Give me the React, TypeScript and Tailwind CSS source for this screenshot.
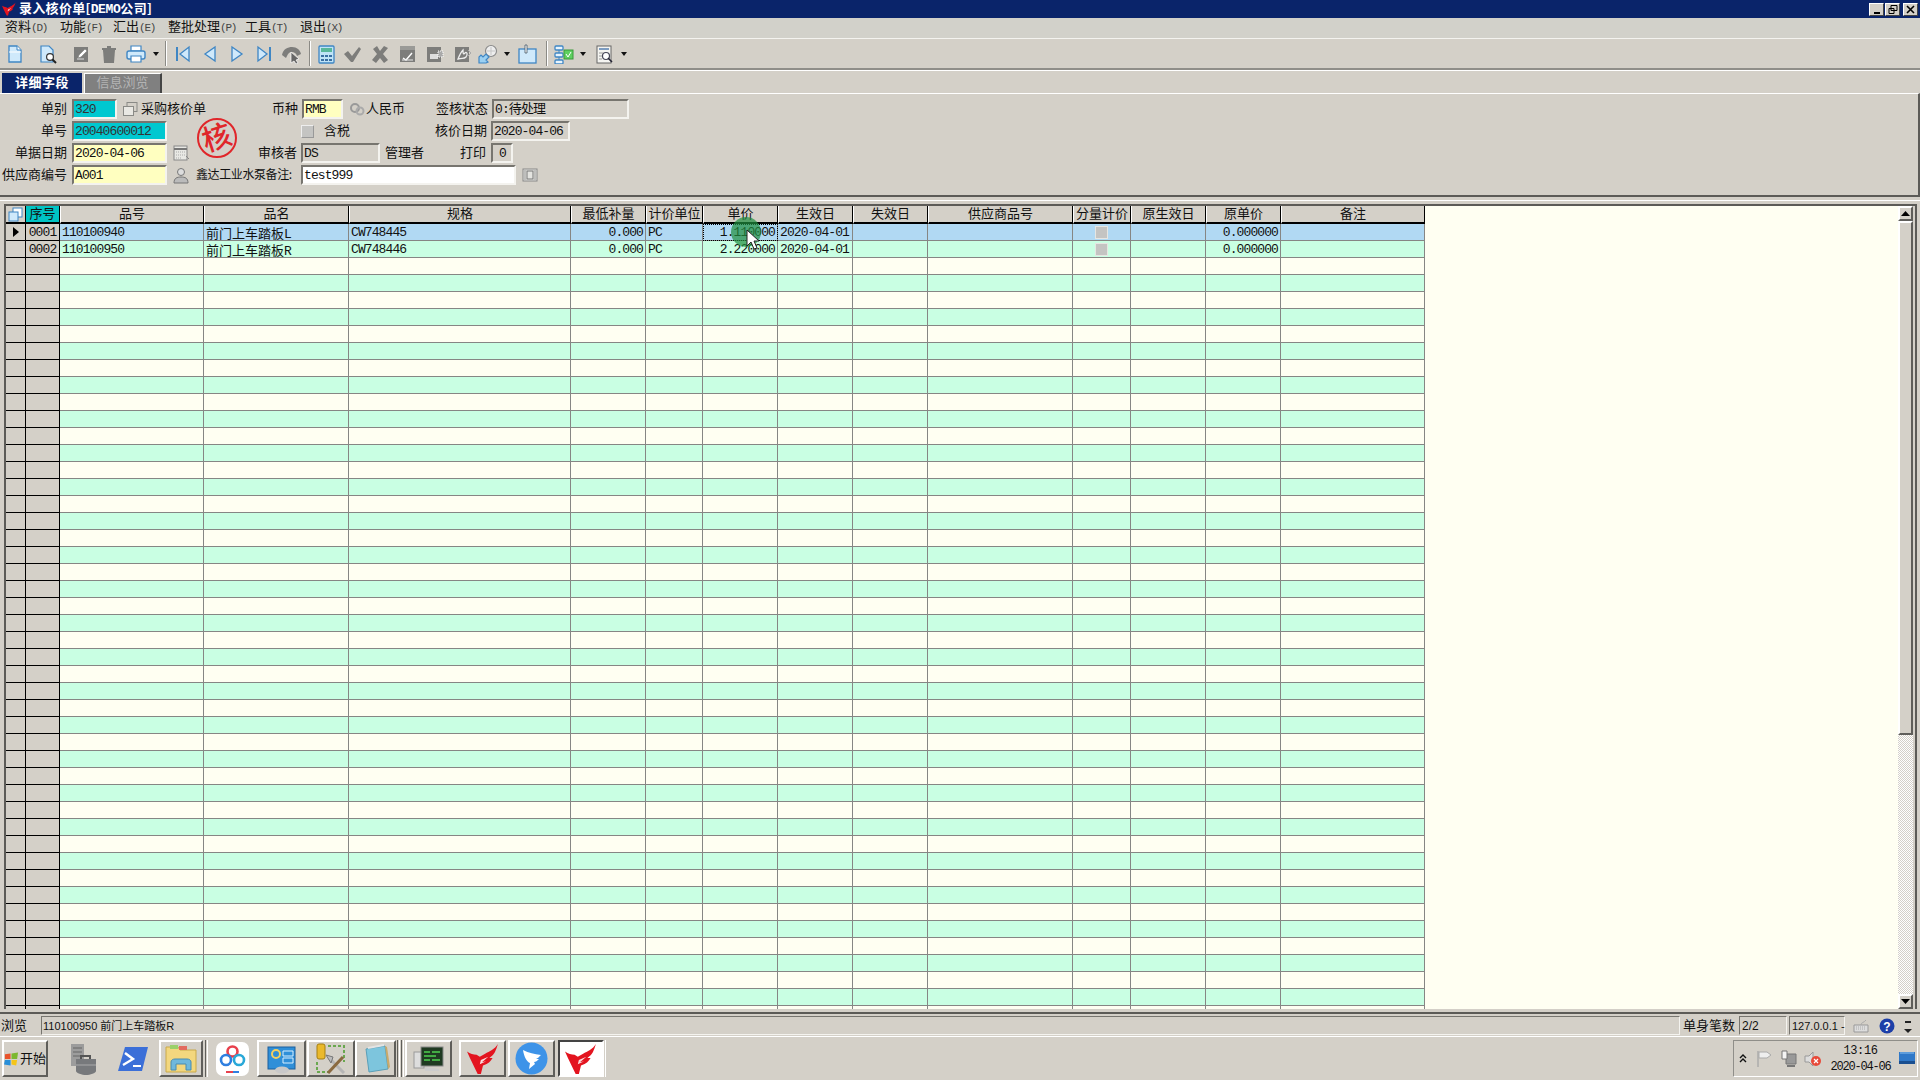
import React from "react";

const COLS = "grid grid-cols-[20px_34px_144px_145px_222px_75px_57px_75px_75px_75px_145px_58px_75px_75px_144px]";
const sunken = "border-2 border-t-[#77756f] border-l-[#77756f] border-b-[#f4f3ef] border-r-[#f4f3ef]";
const raised = "border-2 border-t-white border-l-white border-b-[#5f5e5a] border-r-[#5f5e5a]";
const mono = "font-['Liberation_Mono','Noto_Sans_CJK_SC',monospace] text-[13px] tracking-[-0.9px]";

const B = "#3f86c4";
const P = "#cfe9fb";
const G = "#7d7d7b";

const S = ({ w = 20, h = 20, children }: { w?: number; h?: number; children: React.ReactNode }) => (
  <svg width={w} height={h} viewBox={`0 0 ${w} ${h}`} className="block shrink-0">{children}</svg>
);

const Dd = () => (
  <div className="flex w-[14px] justify-center"><S w={6} h={4}><path d="M0 0h6L3 4z" fill="#111" /></S></div>
);
const Sep = ({ m }: { m: number }) => (
  <div className="h-[25px] w-[2px] border-l border-l-[#8b8a85] border-r border-r-white" style={{ marginLeft: m, marginRight: m }} />
);
const Tb = ({ children, w = 27 }: { children: React.ReactNode; w?: number }) => (
  <div className="flex shrink-0 justify-center" style={{ width: w }}>{children}</div>
);

const icons = {
  doc: <S><path d="M4 2h8l4 4v12H4z" fill={P} stroke={B} strokeWidth="1.3" /><path d="M4 8h12" stroke="#fff" strokeWidth="1" /><path d="M12 2v4h4" fill="#fff" stroke={B} /></S>,
  preview: <S><path d="M3 2h8l4 4v12H3z" fill={P} stroke={B} strokeWidth="1.2" /><circle cx="12" cy="13" r="3.4" fill="#fff" stroke="#333" strokeWidth="1.2" /><path d="M14.5 15.5l3.5 3.5" stroke="#222" strokeWidth="2" /></S>,
  edit: <S><rect x="3" y="3" width="14" height="15" fill={G} /><path d="M7 14l1-3 6-6 2 2-6 6z" fill="#fff" stroke={G} strokeWidth=".6" /><path d="M6 15h7" stroke="#ddd" /></S>,
  trash: <S><path d="M3 4h14v2H3z" fill={G} /><path d="M8 2h4v2H8z" fill={G} /><path d="M4 6h12l-1 13H5z" fill={G} /></S>,
  printer: <S w={22}><path d="M6 2h10v5H6z" fill="#fff" stroke={B} strokeWidth="1.2" /><rect x="2" y="7" width="18" height="8" rx="2" fill={P} stroke={B} strokeWidth="1.4" /><path d="M6 12h10v6H6z" fill="#fff" stroke={B} strokeWidth="1.2" /></S>,
  first: <S><path d="M4 3v14" stroke={B} strokeWidth="2" /><path d="M16 3v14L7 10z" fill={P} stroke={B} strokeWidth="1.3" /></S>,
  prev: <S><path d="M15 3v14L5 10z" fill={P} stroke={B} strokeWidth="1.3" /></S>,
  next: <S><path d="M5 3v14l10-7z" fill={P} stroke={B} strokeWidth="1.3" /></S>,
  last: <S><path d="M16 3v14" stroke={B} strokeWidth="2" /><path d="M4 3v14l9-7z" fill={P} stroke={B} strokeWidth="1.3" /></S>,
  undo: <S w={24}><path d="M2 11C3 5 8 3 12 3c5 0 8 3 9 7l-4 2c-1-3-3-4-5-4-3 0-4 2-5 4l-1 2z" fill={G} /><path d="M11 8l8 7-3 1 2 3-2 1-2-3-3 2z" fill="#666" stroke="#fff" strokeWidth=".7" /></S>,
  calc: <S><rect x="3" y="2" width="15" height="17" rx="1" fill="#bfe3f7" stroke={B} strokeWidth="1.3" /><rect x="5" y="4" width="11" height="4" fill="#58b79a" /><path d="M5 11h3v2H5zM9 11h3v2H9zM13 11h3v2h-3zM5 15h3v2H5zM9 15h3v2H9zM13 15h3v2h-3z" fill="#3a6fa3" /></S>,
  check: <S><path d="M2 10l4-3 4 5 7-9 2 2-8 13h-2z" fill={G} /></S>,
  x: <S><path d="M3 5l4-3 3 5 4-5 4 2-5 6 5 6-4 3-4-5-4 5-4-3 5-6z" fill={G} /></S>,
  g1: <S><rect x="3" y="4" width="15" height="14" fill={G} /><rect x="3" y="2" width="15" height="4" fill="#9a9a97" /><path d="M6 14l3 2 6-7" stroke="#fff" strokeWidth="1.4" fill="none" /><path d="M5 16h11" stroke="#e8e8e8" /></S>,
  g2: <S><rect x="3" y="3" width="14" height="15" fill={G} /><rect x="6" y="10" width="8" height="5" fill="#ddd" /><path d="M14 7h5v6h-5z" fill="#aaa" stroke="#fff" strokeDasharray="1 1" /></S>,
  g3: <S><rect x="3" y="3" width="14" height="15" fill={G} /><path d="M6 15c2-5 3-7 5-9 0 3 0 5 2 3s3 2 1 4-3 1-8 2z" fill="none" stroke="#eee" strokeWidth="1.3" /><path d="M16 6l3 3-3 3" stroke="#aaa" fill="none" /></S>,
  key: <S w={22}><circle cx="14" cy="7" r="5.5" fill="#eee" stroke="#8a8a8a" strokeWidth="1.2" /><path d="M14 3v8M10 7h8" stroke="#c6c6c6" /><path d="M2 19v-6l2-2 2 2 3-3 3 3-3 3 2 2-2 1z" fill="#9bd0f2" stroke={B} strokeWidth="1.2" /></S>,
  note: <S w={22}><rect x="2" y="5" width="17" height="14" fill={P} stroke={B} strokeWidth="1.3" /><path d="M8 1h2v8H8z" fill="#fff" stroke="#456" strokeWidth=".8" /></S>,
  tree: <S w={22}><rect x="2" y="2" width="8" height="4" rx="1" fill="#e8f4fc" stroke={B} strokeWidth="1.3" /><rect x="2" y="9" width="8" height="4" rx="1" fill="#e8f4fc" stroke={B} strokeWidth="1.3" /><rect x="2" y="16" width="8" height="4" rx="1" fill="#e8f4fc" stroke={B} strokeWidth="1.3" /><path d="M6 6v3M6 13v3" stroke={B} /><rect x="11" y="6" width="9" height="9" fill="#5fd060" stroke="#3a9a3a" /><path d="M13 10l2 3 3-5" stroke="#fff" fill="none" /></S>,
  docs: <S><rect x="3" y="2" width="14" height="17" fill="#f4f4f0" stroke="#666" /><path d="M5 5h10" stroke="#7d9cc0" strokeWidth="2" /><circle cx="12" cy="12" r="3.5" fill="#fff" stroke="#445" strokeWidth="1.2" /><path d="M14 14l4 4" stroke="#223" strokeWidth="1.6" /><path d="M5 9h4M5 12h3M5 15h3" stroke="#999" /></S>,
};

const Redlogo = ({ w = 30, h = 28 }: { w?: number; h?: number }) => (
  <svg width={w} height={h} viewBox="0 0 30 28" className="block shrink-0">
    <path d="M0 7c3 2 6 3 9 3l3 2 5-3c4-2 9-4 12-9-2 6-3 10-8 13l3 0c-3 5-6 6-9 7l-2 8-3 0C7 22 3 14 0 7z" fill="#e3141f" />
    <path d="M11 23l2-8 7-3-6 5 4-1-6 3z" fill="#fff" opacity=".85" />
  </svg>
);

const Lb = ({ w, children, className = "" }: { w: number; children: React.ReactNode; className?: string }) => (
  <div className={`shrink-0 whitespace-nowrap pb-[2px] text-right ${className}`} style={{ width: w }}>{children}</div>
);
const Fd = ({ w, bg, children, className = "" }: { w: number; bg: string; children?: React.ReactNode; className?: string }) => (
  <div className={`${sunken} ${mono} ${bg} h-[20px] shrink-0 whitespace-nowrap pl-[1px] leading-[17px] ${className}`} style={{ width: w }}>{children}</div>
);

type Row = { seq?: string; no?: string; name?: string; suffix?: string; spec?: string; min?: string; unit?: string; price?: string; from?: string; old?: string };
const data: Row[] = [
  { seq: "0001", no: "110100940", name: "前门上车踏板", suffix: "L", spec: "CW748445", min: "0.000", unit: "PC", price: "1.110000", from: "2020-04-01", old: "0.000000" },
  { seq: "0002", no: "110100950", name: "前门上车踏板", suffix: "R", spec: "CW748446", min: "0.000", unit: "PC", price: "2.220000", from: "2020-04-01", old: "0.000000" },
];
const rows: Row[] = [...data, ...Array.from({ length: 45 }, () => ({}))];
const heads = ["品号", "品名", "规格", "最低补量", "计价单位", "单价", "生效日", "失效日", "供应商品号", "分量计价", "原生效日", "原单价", "备注"];
const cell = "border-r border-b border-[#868684] h-[17px] whitespace-nowrap leading-[18px]";

const Cb = () => <div className="mt-[1px] h-[13px] w-[13px] border border-[#e6e6e2] bg-[#c4c4c2]" />;

function GridRow({ r, i }: { r: Row; i: number }) {
  const bg = i === 0 ? "bg-[#b1d9f3]" : i % 2 === 1 ? "bg-[#c9ffe3]" : "bg-[#fffff2]";
  const num = `${cell} ${mono} px-[2px] text-right`;
  const txt = `${cell} ${mono} px-[2px]`;
  return (
    <div className={`${COLS} ${bg}`}>
      <div className="flex h-[17px] items-center justify-center border-r border-b border-black bg-[#d4d0c8]">
        {i === 0 && <S w={6} h={10}><path d="M0 0l6 5-6 5z" fill="#000" /></S>}
      </div>
      <div className={`h-[17px] border-r border-b border-black bg-[#d4d0c8] text-center leading-[18px] ${mono}`}>{r.seq}</div>
      <div className={txt}>{r.no}</div>
      <div className={`${cell} px-[2px]`}>{r.name}{r.suffix && <span className={mono}>{r.suffix}</span>}</div>
      <div className={txt}>{r.spec}</div>
      <div className={num}>{r.min}</div>
      <div className={txt}>{r.unit}</div>
      <div className={`${num} ${i === 0 ? "outline-1 -outline-offset-1 outline-dotted outline-black" : ""}`}>{r.price}</div>
      <div className={txt}>{r.from}</div>
      <div className={cell} />
      <div className={cell} />
      <div className={`${cell} flex items-center justify-center`}>{r.seq && <Cb />}</div>
      <div className={cell} />
      <div className={num}>{r.old}</div>
      <div className={cell} />
    </div>
  );
}

const SB = ({ children }: { children: React.ReactNode }) => (
  <div className={`flex h-[15px] w-[15px] shrink-0 items-center justify-center bg-[#d4d0c8] ${raised}`}>{children}</div>
);

const WinBtn = ({ children }: { children: React.ReactNode }) => (
  <div className="flex h-[13px] w-[15px] items-center justify-center border border-t-white border-l-white border-b-[#444] border-r-[#444] bg-[#d4d0c8]">{children}</div>
);

const TaskBtn = ({ w, children, active, flat }: { w: number; children: React.ReactNode; active?: boolean; flat?: boolean }) => (
  <div
    className={`flex h-[37px] shrink-0 items-center justify-center ${flat ? "" : active ? "border-2 border-t-[#444] border-l-[#444] border-b-white border-r-white bg-white" : raised}`}
    style={{ width: w }}
  >{children}</div>
);

export default function App() {
  return (
    <div className="relative flex h-[1080px] w-[1920px] flex-col overflow-hidden bg-[#d4d0c8] font-['Noto_Sans_CJK_SC',sans-serif] text-[13px] leading-[18px] text-[#111]">
      {/* title */}
      <div className="flex h-[18px] shrink-0 items-center bg-[#0a246a] pl-[2px] text-white">
        <Redlogo w={14} h={14} />
        <span className="ml-[3px] whitespace-nowrap font-bold tracking-[0.3px]">录入核价单[<span className="font-['Liberation_Mono'] text-[13px] tracking-[-0.4px]">DEMO</span>公司]</span>
        <div className="ml-auto mr-[2px] flex gap-[1px]">
          <WinBtn><S w={8} h={9}><path d="M1 7h6v2H1z" fill="#000" /></S></WinBtn>
          <WinBtn><S w={10} h={9}><path d="M3 .5h6v5H3zM1 3.5h5v5H1z" fill="#d4d0c8" stroke="#000" /></S></WinBtn>
          <div className="w-[1px]" />
          <WinBtn><S w={9} h={9}><path d="M1 1l7 7M8 1L1 8" stroke="#000" strokeWidth="1.6" /></S></WinBtn>
        </div>
      </div>

      {/* menu */}
      <div className="flex h-[21px] shrink-0 items-center border-b border-b-[#f4f3ef] bg-[#d2d1ca] pb-[2px] pl-[5px]">
        {[["资料", "(D)", 55], ["功能", "(F)", 53], ["汇出", "(E)", 55], ["整批处理", "(P)", 77], ["工具", "(T)", 55], ["退出", "(X)", 50]].map(([a, b, w]) => (
          <div key={a as string} className="whitespace-nowrap" style={{ width: w as number }}>
            {a}<span className="font-['Liberation_Mono'] text-[11px] tracking-[-1.2px] text-[#444]">{b}</span>
          </div>
        ))}
      </div>

      {/* toolbar */}
      <div className="flex h-[31px] shrink-0 items-center border-b-2 border-b-[#8f8e89] pl-[1px]">
        <Tb>{icons.doc}</Tb>
        <Tb w={39}>{icons.preview}</Tb>
        <Tb w={28}>{icons.edit}</Tb>
        <Tb>{icons.trash}</Tb>
        <Tb w={27}>{icons.printer}</Tb>
        <Dd />
        <Sep m={2} />
        <Tb>{icons.first}</Tb>
        <Tb>{icons.prev}</Tb>
        <Tb>{icons.next}</Tb>
        <Tb>{icons.last}</Tb>
        <Tb w={29}>{icons.undo}</Tb>
        <Sep m={3} />
        <Tb w={24}>{icons.calc}</Tb>
        <Tb w={28}>{icons.check}</Tb>
        <Tb w={27}>{icons.x}</Tb>
        <Tb w={27}>{icons.g1}</Tb>
        <Tb w={28}>{icons.g2}</Tb>
        <Tb w={28}>{icons.g3}</Tb>
        <Tb w={24}>{icons.key}</Tb>
        <Dd />
        <Tb w={28}>{icons.note}</Tb>
        <Sep m={4} />
        <Tb w={24}>{icons.tree}</Tb>
        <Dd />
        <Tb w={27}>{icons.docs}</Tb>
        <Dd />
      </div>

      {/* tabs */}
      <div className="flex h-[23px] shrink-0 items-end gap-[2px] border-t border-t-white pl-[2px]">
        <div className="flex h-[20px] w-[80px] items-center justify-center bg-[#0a246a] pb-[3px] font-bold tracking-[0.5px] text-white">详细字段</div>
        <div className="flex h-[20px] w-[78px] items-center justify-center border-t border-l border-white border-r-2 border-r-[#444] bg-[#808080] pb-[3px] text-[#b4b4b4]">信息浏览</div>
      </div>

      {/* form */}
      <div className="relative flex h-[104px] shrink-0 flex-col border-t border-t-white border-b-2 border-b-[#5c5b57] border-r-2 border-r-[#5c5b57] pt-[4px]">
        <div className="flex h-[22px] items-center">
          <Lb w={68} className="pr-[1px]">单别</Lb>
          <Fd w={45} bg="bg-[#00c8d0]" className="ml-[4px] !text-[#333]">320</Fd>
          <div className="ml-[5px] w-[16px]"><S w={16} h={16}><rect x="5" y="1.5" width="10" height="9" fill="#d4d0c8" stroke="#8a8a86" /><rect x="1.5" y="5.5" width="10" height="9" fill="#e9e8e3" stroke="#8a8a86" /></S></div>
          <div className="ml-[3px] w-[65px] whitespace-nowrap pb-[2px]">采购核价单</div>
          <Lb w={92}>币种</Lb>
          <Fd w={41} bg="bg-[#ffffc0]" className="ml-[4px]">RMB</Fd>
          <div className="ml-[6px] w-[17px]"><S w={16} h={16}><circle cx="6" cy="7" r="4" fill="none" stroke="#999" strokeWidth="2" /><circle cx="11" cy="10" r="3.5" fill="none" stroke="#aaa" strokeWidth="2" /></S></div>
          <div className="w-[39px] whitespace-nowrap pb-[2px]">人民币</div>
          <Lb w={83}>签核状态</Lb>
          <Fd w={137} bg="bg-[#d4d0c8]" className="ml-[4px]">0:待处理</Fd>
        </div>
        <div className="flex h-[22px] items-center">
          <Lb w={68} className="pr-[1px]">单号</Lb>
          <Fd w={95} bg="bg-[#00c8d0]" className="ml-[4px] !text-[#333]">20040600012</Fd>
          <div className="ml-[134px] h-[13px] w-[13px] border border-t-[#eee] border-l-[#eee] border-b-[#999] border-r-[#999] bg-[#c4c4c2]" />
          <div className="ml-[10px] w-[31px] whitespace-nowrap pb-[2px]">含税</div>
          <Lb w={132}>核价日期</Lb>
          <Fd w={79} bg="bg-[#d4d0c8]" className="ml-[4px]">2020-04-06</Fd>
        </div>
        <div className="flex h-[22px] items-center">
          <Lb w={68} className="pr-[1px]">单据日期</Lb>
          <Fd w={95} bg="bg-[#ffffc0]" className="ml-[4px]">2020-04-06</Fd>
          <div className="ml-[6px] w-[17px]"><S w={16} h={18}><rect x="1" y="2" width="13" height="14" fill="#e8e8e4" stroke="#888" /><path d="M1 5h13" stroke="#777" strokeWidth="2" /><path d="M3 8h9M3 11h9M3 14h6" stroke="#aaa" strokeDasharray="1 1" /><path d="M13 12l3 3" stroke="#888" /></S></div>
          <Lb w={107}>审核者</Lb>
          <Fd w={79} bg="bg-[#d4d0c8]" className="ml-[4px]">DS</Fd>
          <div className="ml-[5px] w-[39px] whitespace-nowrap pb-[2px]">管理者</div>
          <Lb w={62}>打印</Lb>
          <Fd w={22} bg="bg-[#d4d0c8]" className="ml-[5px] pl-[6px]">0</Fd>
        </div>
        <div className="flex h-[22px] items-center">
          <Lb w={68} className="pr-[1px]">供应商编号</Lb>
          <Fd w={95} bg="bg-[#ffffc0]" className="ml-[4px]">A001</Fd>
          <div className="ml-[6px] w-[17px]"><S w={16} h={18}><circle cx="8" cy="6" r="3.5" fill="#ddd" stroke="#777" /><path d="M1 17c0-5 3-6 7-6s7 1 7 6z" fill="#bbb" stroke="#777" /></S></div>
          <div className="ml-[6px] w-[105px] whitespace-nowrap pb-[2px] text-[12px] tracking-[-0.4px]">鑫达工业水泵备注:</div>
          <Fd w={215} bg="bg-white">test999</Fd>
          <div className="ml-[6px]"><S w={16} h={16}><rect x="1" y="2" width="14" height="12" fill="#e4e4e0" stroke="#888" /><rect x="5" y="4" width="6" height="8" fill="none" stroke="#777" /><path d="M3 3v10M13 3v10" stroke="#999" /></S></div>
        </div>
        {/* stamp */}
        <svg width="42" height="42" viewBox="0 0 42 42" className="absolute left-[196px] top-[23px]">
          <circle cx="21" cy="21" r="19" fill="none" stroke="#e0262a" strokeWidth="2" />
          <text x="21" y="31" textAnchor="middle" fontSize="29" fontWeight="500" fill="#e0262a" fontFamily="Noto Sans CJK SC" transform="rotate(-18 21 21)">核</text>
        </svg>
      </div>

      {/* grid */}
      <div className="mt-[3px] flex min-h-0 flex-1 flex-col border-t border-t-white border-b-2 border-b-[#5c5b57] pl-[4px] pr-[3px] pt-[3px] pb-[3px]">
        <div className="flex min-h-0 flex-1 overflow-hidden border-t-2 border-l-2 border-t-[#5c5b57] border-l-[#5c5b57] bg-[#fffff2]">
          <div className="w-[1419px] shrink-0 overflow-hidden">
            <div className={`${COLS} h-[18px] bg-[#d4d0c8] leading-[13px]`}>
              <div className="flex items-center justify-center border-r border-b-2 border-black">
                <S w={15} h={15}><rect x="5" y="1" width="9" height="9" fill="#fff" stroke="#3f86c4" /><rect x="1" y="5" width="9" height="9" fill="#cfe9fb" stroke="#3f86c4" /></S>
              </div>
              <div className="border-r border-b-2 border-black bg-[#00c4c4] text-center">序号</div>
              {heads.map((h) => (
                <div key={h} className="whitespace-nowrap border-r border-b-2 border-r-black border-b-black border-l border-l-white text-center">{h}</div>
              ))}
            </div>
            {rows.map((r, i) => <GridRow key={i} r={r} i={i} />)}
          </div>
          <div className="flex-1" />
          <div className="flex w-[15px] shrink-0 flex-col">
            <SB><S w={9} h={5}><path d="M0 5h9L4.5 0z" fill="#000" /></S></SB>
            <div className={`h-[514px] shrink-0 bg-[#d4d0c8] ${raised}`} />
            <div className="flex-1 bg-[repeating-conic-gradient(#d4d0c8_0_25%,#ffffff_0_50%)] bg-[length:2px_2px]" />
            <SB><S w={9} h={5}><path d="M0 0h9L4.5 5z" fill="#000" /></S></SB>
          </div>
          <div className="w-[4px] shrink-0 border-r-2 border-r-[#5c5b57] bg-[#d4d0c8]" />
        </div>
      </div>

      {/* status */}
      <div className="flex h-[23px] shrink-0 items-center border-b border-b-white pb-[1px] pt-[2px] font-['Liberation_Sans','Noto_Sans_CJK_SC',sans-serif] text-[12px]">
        <div className="w-[41px] pl-[1px] text-[13px]">浏览</div>
        <div className={`${sunken} !border h-[19px] w-[1639px] pl-[1px] text-[11px] leading-[19px]`}>110100950 前门上车踏板R</div>
        <div className="w-[58px] text-center text-[13px] leading-[18px]">单身笔数</div>
        <div className={`${sunken} !border ml-[1px] h-[19px] w-[48px] pl-[2px] leading-[18px]`}>2/2</div>
        <div className={`${sunken} !border ml-[2px] h-[19px] w-[56px] whitespace-nowrap pl-[2px] text-[11px] leading-[18px]`}>127.0.0.1 -</div>
        <div className="ml-[7px]"><S w={18} h={16}><path d="M2 7h14v7H2z" fill="#ddd" stroke="#999" /><path d="M4 9h10M4 11h10" stroke="#aaa" strokeDasharray="1 1" /><path d="M9 7c0-3 3-2 5-5" stroke="#aaa" fill="none" /></S></div>
        <div className="ml-[9px]"><svg width="16" height="16" viewBox="0 0 16 16" className="block"><circle cx="8" cy="8" r="7.5" fill="#1d3fa8" /><text x="8" y="12.5" textAnchor="middle" fontSize="12" fontWeight="700" fill="#fff" fontFamily="Liberation Sans">?</text></svg></div>
        <div className="ml-[9px]"><S w={8} h={14}><path d="M1 2h6v2H1zM0 10h8l-4 4z" fill="#222" /></S></div>
      </div>

      {/* taskbar */}
      <div className="flex h-[43px] shrink-0 items-start pt-[3px] pl-[2px]">
        <TaskBtn w={46}>
          <svg width="16" height="16" viewBox="0 0 16 16" className="block"><path d="M1 3l6-1v6H1z" fill="#e8532b" /><path d="M8 2l7-1-1 7H8z" fill="#7cb82f" /><path d="M1 9h6v6l-7-1z" fill="#2a8fd8" /><path d="M8 9h6l-1 6-5-1z" fill="#f5c518" /></svg>
          <span className="ml-[1px] whitespace-nowrap pb-[2px]">开始</span>
        </TaskBtn>
        <div className="w-[20px]" />
        <TaskBtn w={30} flat>
          <S w={30} h={34}>
            <rect x="3" y="2" width="13" height="22" fill="#9c9c9c" /><path d="M5 6h9M5 10h9M5 14h9" stroke="#666" />
            <path d="M8 17h20v12c0 2-6 4-10 4s-10-2-10-4z" fill="#77797c" /><path d="M13 17v-3h9v3" fill="none" stroke="#555" strokeWidth="2" /><path d="M8 23h20" stroke="#aaa" />
          </S>
        </TaskBtn>
        <div className="w-[20px]" />
        <TaskBtn w={30} flat>
          <S w={30} h={26}><path d="M7 1h23l-6 24H0z" fill="#3b6fd8" /><path d="M7 7l8 6-10 6" stroke="#fff" strokeWidth="2.4" fill="none" /><path d="M15 20h8" stroke="#fff" strokeWidth="2" /></S>
        </TaskBtn>
        <div className="w-[11px]" />
        <TaskBtn w={44}>
          <S w={32} h={30}>
            <path d="M1 3h12l2 3h16v22H1z" fill="#f3d77e" stroke="#c9a94a" /><path d="M5 1h8v4H5z" fill="#9ad06a" /><path d="M14 2h8v4h-8z" fill="#e26a5f" />
            <path d="M6 26v-8c0-2 2-3 4-3h12c2 0 4 1 4 3v8h-5v-6H11v6z" fill="#6fb8dc" stroke="#4a8cb0" />
          </S>
        </TaskBtn>
        <div className="ml-[2px] h-[37px] w-[3px] border-l border-r border-l-[#5f5e5a] border-r-white" />
        <div className="w-[8px]" />
        <TaskBtn w={33} flat>
          <svg width="33" height="34" viewBox="0 0 33 34" className="block">
            <rect width="33" height="34" rx="7" fill="#fff" />
            <circle cx="16.5" cy="9.5" r="5" fill="none" stroke="#e8404c" strokeWidth="2.6" />
            <circle cx="10" cy="18" r="5" fill="none" stroke="#2f7fe0" strokeWidth="2.6" />
            <circle cx="23" cy="18" r="5" fill="none" stroke="#29a8d8" strokeWidth="2.6" />
            <path d="M10 30h7" stroke="#e8404c" strokeWidth="2" /><path d="M17 30h6" stroke="#2f7fe0" strokeWidth="2" />
          </svg>
        </TaskBtn>
        <div className="w-[8px]" />
        <TaskBtn w={49}>
          <S w={30} h={30}>
            <rect x="1" y="3" width="27" height="22" fill="#2f8fd8" stroke="#1d5f9c" />
            <circle cx="9" cy="10" r="4" fill="none" stroke="#f5d060" strokeWidth="2" />
            <path d="M16 7h10v5H16zM16 14h10v5H16z" fill="none" stroke="#d8efff" />
            <ellipse cx="15" cy="26" rx="7" ry="3.5" fill="#c8c8c8" />
          </S>
        </TaskBtn>
        <div className="w-[1px]" />
        <TaskBtn w={48}>
          <S w={32} h={32}>
            <rect x="2" y="1" width="8" height="15" rx="2" fill="#eab92c" stroke="#a57f10" />
            <path d="M13 3h16v16" fill="none" stroke="#6aa84f" strokeWidth="2" strokeDasharray="3 2" /><path d="M2 19v10h12" fill="none" stroke="#6aa84f" strokeWidth="2" strokeDasharray="3 2" />
            <path d="M14 15l15 15" stroke="#b5b5b5" strokeWidth="3" /><path d="M28 14L13 30" stroke="#8a6a40" strokeWidth="3" /><path d="M11 12l7 2-2 6z" fill="#bbb" stroke="#777" />
          </S>
        </TaskBtn>
        <TaskBtn w={41}>
          <S w={30} h={30}><path d="M5 5l19-3 3 23-19 3z" fill="#7dc5dd" stroke="#5a9fb8" /><path d="M24 2l3 23 2-2-3-20z" fill="#c9a96a" /><path d="M7 4l16-3" stroke="#e4e4e4" strokeWidth="2" /></S>
        </TaskBtn>
        <div className="ml-[1px] h-[37px] w-[3px] border-l border-r border-l-[#5f5e5a] border-r-white" />
        <div className="ml-[1px] h-[37px] w-[3px] border-l border-r border-l-[#5f5e5a] border-r-white" />
        <div className="w-[1px]" />
        <TaskBtn w={47}>
          <S w={32} h={28}><rect x="1" y="7" width="10" height="16" fill="#ddd" stroke="#999" /><rect x="8" y="2" width="22" height="19" fill="#1f3a22" stroke="#888" /><path d="M11 7h6M11 11h12M11 15h6M19 7h8M19 15h8" stroke="#4fd04f" strokeWidth="1.4" /><path d="M12 22l14 2v2H12z" fill="#ccc" /></S>
        </TaskBtn>
        <div className="w-[7px]" />
        <TaskBtn w={47}><Redlogo w={32} h={30} /></TaskBtn>
        <div className="w-[2px]" />
        <TaskBtn w={47}>
          <svg width="33" height="33" viewBox="0 0 33 33" className="block"><circle cx="16.5" cy="16.5" r="16" fill="#3d93e8" /><path d="M8 8c6 3 11 4 18 5-2 2-3 3-5 4l3 0c-2 2-3 3-5 3l1 2-6 5 1-6c-3-1-6-6-7-13z" fill="#fff" /></svg>
        </TaskBtn>
        <div className="w-[3px]" />
        <TaskBtn w={46} active><Redlogo w={32} h={30} /></TaskBtn>
        <div className="h-[37px] w-[2px] border-r border-r-white" />

        <div className="ml-auto mr-[2px] flex h-[37px] w-[185px] items-center border border-t-[#8f8e89] border-l-[#8f8e89] border-b-white border-r-white pl-[5px] pr-[2px]">
          <S w={8} h={10}><path d="M1 4l3-3 3 3M1 8l3-3 3 3" stroke="#111" strokeWidth="1.4" fill="none" /></S>
          <div className="ml-[9px]"><S w={18} h={18}><path d="M2 1v16" stroke="#aaa" strokeWidth="1.4" /><path d="M3 2h8l4 3-4 3H3z" fill="#eee" stroke="#aaa" /></S></div>
          <div className="ml-[7px]"><S w={16} h={18}><path d="M5 4h10v10H5z" fill="#999" stroke="#777" /><path d="M1 1h5v8H1z" fill="#f4f4f4" stroke="#777" /><path d="M6 16h8" stroke="#777" strokeWidth="2" /></S></div>
          <div className="ml-[7px]"><S w={18} h={18}><path d="M1 6h4l4-4v14l-4-4H1z" fill="#ddd" stroke="#999" /><circle cx="12" cy="11" r="5" fill="#e84a3a" /><path d="M10 9l4 4M14 9l-4 4" stroke="#fff" strokeWidth="1.2" /></S></div>
          <div className="flex-1 text-center font-['Liberation_Mono'] text-[12px] leading-[16px] tracking-[-1.2px]">
            <div className="tracking-[-0.4px]">13:16</div>
            <div>2020-04-06</div>
          </div>
          <S w={16} h={14}><rect width="16" height="12" fill="#2f78c8" /><path d="M0 9h16v3H0z" fill="#1a4f90" /><path d="M1 1h14" stroke="#8cc0f0" /></S>
        </div>
      </div>

      {/* pointer marker */}
      <div className="absolute left-[731px] top-[217px] h-[30px] w-[30px] rounded-full bg-[#1f8f3f]/70" />
      <svg width="14" height="22" viewBox="0 0 14 22" className="absolute left-[746px] top-[229px]"><path d="M1 1v16l4-4 3 7 3-1-3-7h5z" fill="#fff" stroke="#222" /></svg>
    </div>
  );
}
